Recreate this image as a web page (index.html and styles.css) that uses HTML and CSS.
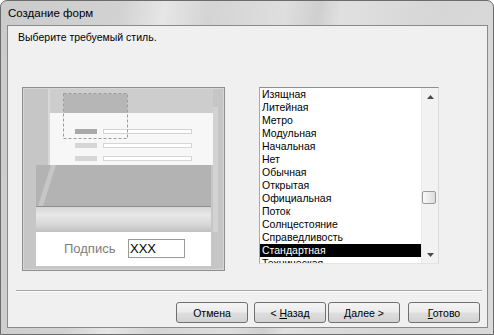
FILE: index.html
```html
<!DOCTYPE html>
<html lang="ru">
<head>
  <meta charset="UTF-8" />
  <title>Создание форм</title>
  <link rel="stylesheet" href="styles.css">
</head>
<body>
  <div class="window">
    <div class="titlebar">Создание форм</div>
    <div class="client">
      <p class="prompt">Выберите требуемый стиль.</p>

      <div class="main">
        <!-- preview of the selected style -->
        <div class="preview">
          <svg width="203" height="184" viewBox="0 0 203 184">
            <defs>
              <linearGradient id="bar" x1="0" y1="0" x2="0" y2="1">
                <stop offset="0" stop-color="#d4d4d4"/>
                <stop offset="0.35" stop-color="#e8e8e8"/>
                <stop offset="0.7" stop-color="#d8d8d8"/>
                <stop offset="1" stop-color="#c0c0c0"/>
              </linearGradient>
            </defs>
            <rect x="0.5" y="0.5" width="202" height="183" fill="#c6c6c6" stroke="#8e8e8e"/>
            <rect x="1.5" y="1.5" width="200" height="181" fill="none" stroke="#d6d6d6"/>
            <rect x="26" y="2" width="2" height="76" fill="#d8d8d8"/>
            <rect x="28" y="2" width="163" height="24" fill="#cdcdcd"/>
            <rect x="28" y="26" width="163" height="52" fill="#f7f7f7"/>
            <rect x="191" y="20" width="5" height="125" fill="#d2d2d2"/>
            <rect x="42" y="7" width="63" height="19" fill="#b6b6b6"/>
            <rect x="53" y="42" width="22" height="5" fill="#a9a9a9"/>
            <rect x="81.5" y="42.5" width="88" height="4" fill="#fff" stroke="#d2d2d2"/>
            <rect x="53" y="56" width="22" height="5" fill="#d6d6d6"/>
            <rect x="81.5" y="56.5" width="88" height="4" fill="#fff" stroke="#d6d6d6"/>
            <rect x="53" y="69" width="22" height="5" fill="#d6d6d6"/>
            <rect x="81.5" y="69.5" width="88" height="4" fill="#fff" stroke="#d6d6d6"/>
            <rect x="41.5" y="6.5" width="64" height="45" fill="none" stroke="#9c9c9c" stroke-dasharray="3 2"/>
            <rect x="14" y="78" width="175" height="41" fill="#b3b3b3"/>
            <polygon points="16,119 29,78 34,78 21,119" fill="#c6c6c6"/>
            <rect x="14" y="119" width="175" height="26" fill="url(#bar)"/>
            <line x1="14" y1="119.5" x2="189" y2="119.5" stroke="#8e8e8e"/>
            <rect x="14" y="145" width="175" height="34" fill="#fff"/>
            <text class="caption" x="42" y="166">Подпись</text>
            <rect x="106.5" y="152.5" width="56" height="18" fill="#fff" stroke="#9a9a9a"/>
            <text class="value" x="108" y="166">XXX</text>
          </svg>
        </div>

        <div class="listbox">
          <ul class="items">
            <li>Изящная</li>
            <li>Литейная</li>
            <li>Метро</li>
            <li>Модульная</li>
            <li>Начальная</li>
            <li>Нет</li>
            <li>Обычная</li>
            <li>Открытая</li>
            <li>Официальная</li>
            <li>Поток</li>
            <li>Солнцестояние</li>
            <li>Справедливость</li>
            <li class="selected">Стандартная</li>
            <li>Техническая</li>
          </ul>
          <div class="scrollbar">
            <div class="arrow">
              <svg width="7" height="4" viewBox="0 0 7 4"><polygon points="0,4 3.5,0 7,4" fill="#4a4a4a"/></svg>
            </div>
            <div class="track"><div class="thumb"></div></div>
            <div class="arrow">
              <svg width="7" height="4" viewBox="0 0 7 4"><polygon points="0,0 7,0 3.5,4" fill="#4a4a4a"/></svg>
            </div>
          </div>
        </div>
      </div>

      <div class="separator"></div>

      <div class="buttons">
        <button class="btn">Отмена</button>
        <button class="btn back">&lt; <u>Н</u>азад</button>
        <button class="btn next"><u>Д</u>алее &gt;</button>
        <button class="btn finish"><u>Г</u>отово</button>
      </div>
    </div>
  </div>
</body>
</html>
```

FILE: styles.css
```css
body {
  margin: 0;
  font-family: "Liberation Sans", Arial, sans-serif;
  font-size: 10.5px;
  color: #000;
  background: #fff;
}
.window {
  width: 494px;
  height: 335px;
  box-sizing: border-box;
  border: 1px solid #6c6c6c;
  border-radius: 7px 7px 0 0;
  background: linear-gradient(100deg, #cbcbcb 0%, #d2d2d2 22%, #e6e6e6 30%, #d4d4d4 38%, #dedede 52%, #cfcfcf 58%, #e0e0e0 62%, #d6d6d6 80%, #dadada 100%);
  display: flex;
  flex-direction: column;
}
.titlebar {
  height: 24px;
  line-height: 25px;
  padding-left: 7px;
  font-size: 11.5px;
}
.client {
  margin: 0 5px 0 6px;
  height: 303px;
  box-sizing: border-box;
  border: 1px solid #8a8a8a;
  background: #f0f0f0;
}
.prompt {
  margin: 0;
  padding: 4px 0 0 10px;
  line-height: 15px;
}
.main {
  display: flex;
  align-items: flex-start;
  gap: 34px;
  margin-top: 42px;
  padding-left: 14px;
}
.preview {
  width: 203px;
  height: 184px;
}
.preview svg {
  display: block;
}
.preview text {
  font-family: "Liberation Sans", Arial, sans-serif;
  font-size: 13px;
}
.preview .caption {
  fill: #7c7c7c;
}
.preview .value {
  fill: #000;
}
.listbox {
  width: 180px;
  height: 177px;
  box-sizing: border-box;
  border: 1px solid;
  border-color: #8e8e8e #dcdcdc #e4e4e4 #a8a8a8;
  background: #fff;
  display: flex;
}
.items {
  list-style: none;
  margin: 0;
  padding: 0;
  width: 161px;
  height: 175px;
  overflow: hidden;
}
.items li {
  height: 13px;
  line-height: 13px;
  padding-left: 2px;
  white-space: nowrap;
}
.items li.selected {
  background: #000;
  color: #fff;
}
.scrollbar {
  width: 17px;
  display: flex;
  flex-direction: column;
  background: #f2f2f2;
  border-left: 1px solid #e8e8e8;
  box-sizing: border-box;
}
.arrow {
  height: 17px;
  display: flex;
  align-items: center;
  justify-content: center;
}
.track {
  flex: 1;
}
.thumb {
  margin: 86px 0 0 0;
  width: 14px;
  height: 13px;
  box-sizing: border-box;
  border: 1px solid #9a9a9a;
  border-radius: 2px;
  background: linear-gradient(90deg, #fafafa, #dcdcdc);
}
.separator {
  margin: 19px 5px 0 8px;
  height: 1px;
  background: #a4a4a4;
  border-bottom: 1px solid #fff;
}
.buttons {
  display: flex;
  justify-content: flex-end;
  margin-top: 10px;
  padding-right: 7px;
}
.btn {
  width: 72px;
  height: 21px;
  padding: 0;
  box-sizing: border-box;
  border: 1px solid #707070;
  border-radius: 3px;
  background: linear-gradient(#f4f4f4 0%, #ebebeb 48%, #dedede 52%, #d2d2d2 100%);
  font-family: inherit;
  font-size: 10.5px;
  color: #000;
}
.back {
  margin-left: 6px;
}
.next {
  margin-left: 2px;
}
.finish {
  margin-left: 8px;
}
```
